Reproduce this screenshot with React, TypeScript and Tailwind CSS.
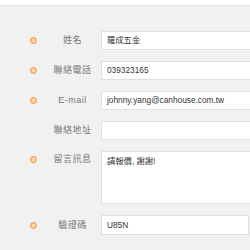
import React from "react";

interface Field {
  label: string;
  value: string;
  required: boolean;
  kind?: "input" | "textarea" | "short";
}

const fields: Field[] = [
  { label: "姓名", value: "羅成五金", required: true },
  { label: "聯絡電話", value: "039323165", required: true },
  { label: "E-mail", value: "johnny.yang@canhouse.com.tw", required: true },
  { label: "聯絡地址", value: "", required: false },
  { label: "留言訊息", value: "請報價, 謝謝!", required: true, kind: "textarea" },
  { label: "驗證碼", value: "U85N", required: true, kind: "short" },
];

function RequiredDot() {
  return (
    <svg width="7" height="7" viewBox="0 0 7 7" className="block">
      <circle cx="3.5" cy="3.5" r="2.8" fill="#fcd9b0" stroke="#f5a04a" strokeWidth="1.2" />
    </svg>
  );
}

export default function App() {
  return (
    <div
      className="w-[250px] h-[250px] overflow-hidden bg-[#f1f1f1]"
      style={{ fontFamily: '"Liberation Sans", "Noto Sans CJK TC", sans-serif' }}
    >
      <div className="h-[6px] bg-white border-b border-[#e2e2e2]" />
      <div className="flex flex-col gap-[11px] pt-[25px]">
        {fields.map((f) => {
          const isArea = f.kind === "textarea";
          return (
            <div key={f.label} className={`flex ${isArea ? "items-start" : "items-center"}`}>
              <div className={`w-[44px] shrink-0 pl-[30px] ${isArea ? "pt-[5px]" : ""}`}>
                {f.required && <RequiredDot />}
              </div>
              <div
                className={`w-[57px] shrink-0 text-center text-[9px] leading-[11px] text-[#777] tracking-[0.5px] ${
                  isArea ? "pt-[3px]" : ""
                }`}
              >
                {f.label}
              </div>
              <div
                className={`shrink-0 bg-white border border-[#e0e0e0] pl-[5px] text-[8.3px] text-[#333] ${
                  isArea
                    ? "w-[300px] h-[53px] pt-[4px] leading-[11px]"
                    : f.kind === "short"
                    ? "w-[148px] h-[20px] flex items-center"
                    : "w-[300px] h-[19px] flex items-center"
                }`}
              >
                {f.value}
              </div>
            </div>
          );
        })}
      </div>
    </div>
  );
}
